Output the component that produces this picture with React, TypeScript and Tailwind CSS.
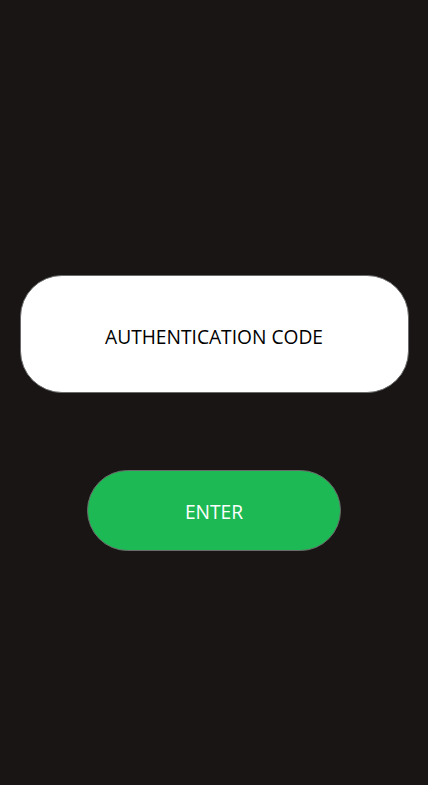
import React from "react";

export default function App() {
  return (
    <div
      className="w-full min-h-[785px] bg-[#191514] flex flex-col items-center pt-[275px]"
      style={{ fontFamily: '"Open Sans", "Noto Sans", sans-serif' }}
    >
      <input
        type="text"
        placeholder="AUTHENTICATION CODE"
        className="w-[389px] h-[118px] rounded-[42px] bg-white border border-[#6b6b6b] pt-[4px] text-center text-[19.2px] text-black placeholder:text-black outline-none"
      />
      <button className="mt-[77px] w-[254px] h-[81px] rounded-full bg-[#1db954] border border-[#6b6b6b] pt-[4px] text-white text-[19.2px]">
        ENTER
      </button>
    </div>
  );
}
